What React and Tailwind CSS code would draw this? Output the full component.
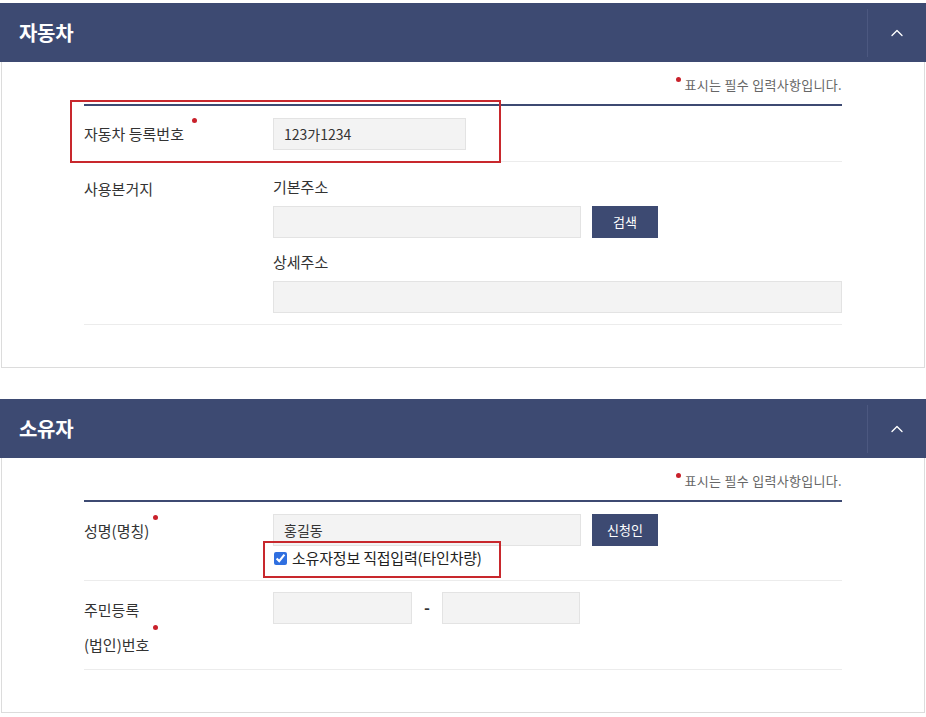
import { ChevronUp } from "lucide-react";

const font = { fontFamily: '"Noto Sans CJK KR", "Noto Sans", sans-serif' };

function Dot({ className = "" }) {
  return <span className={`absolute h-[5px] w-[5px] rounded-full bg-[#c9212b] ${className}`} />;
}

function Field({ className = "", value = "" }) {
  return (
    <div className={`flex h-[32px] items-center border border-[#e3e3e3] bg-[#f3f3f3] px-[10px] text-[14px] text-[#333] ${className}`}>
      {value}
    </div>
  );
}

function NavyButton({ children }) {
  return (
    <button type="button" className="h-[32px] w-[66px] bg-[#3d4a72] text-[13px] text-white">
      {children}
    </button>
  );
}

function Section({ title, children }) {
  return (
    <section>
      <div className="flex h-[59px] items-center bg-[#3d4a72]">
        <h2 className="flex-1 pl-[19px] text-[20px] font-bold tracking-[-0.3px] text-white">{title}</h2>
        <div className="h-[48px] w-px bg-[#4c5880]" />
        <div className="flex w-[58px] items-center justify-center text-white">
          <ChevronUp size={20} strokeWidth={1.6} />
        </div>
      </div>
      <div className="mx-px border border-t-0 border-[#dcdcdc] bg-white px-[82px] pb-[42px]">
        <p className="flex justify-end pt-[13px] pb-[9px] text-[13px] leading-[20px] tracking-[0.3px] text-[#666]">
          <span className="relative pl-[9px]">
            <Dot className="left-0 top-[2px]" />
            표시는 필수 입력사항입니다.
          </span>
        </p>
        <div className="h-[2px] bg-[#3d4a72]" />
        {children}
      </div>
    </section>
  );
}

export default function App() {
  return (
    <div className="min-h-screen bg-white pt-[3px]" style={font}>
      <Section title="자동차">
        <div className="relative flex items-center border-b border-[#ececec] pt-[12px] pb-[11px]">
          <div className="absolute -top-[6px] -left-[14px] h-[63px] w-[431px] border-2 border-[#c8282d]" />
          <div className="w-[189px] text-[15px] text-[#333]">
            <span className="relative">
              자동차 등록번호
              <Dot className="-right-[13px] -top-[5px]" />
            </span>
          </div>
          <Field className="w-[193px]" value="123가1234" />
        </div>

        <div className="flex border-b border-[#ececec] pt-[15px] pb-[11px]">
          <div className="w-[189px] pt-[1px] text-[15px] text-[#333]">사용본거지</div>
          <div className="flex-1">
            <div className="mb-[9px] text-[15px] leading-[20px] text-[#333]">기본주소</div>
            <div className="flex gap-[11px]">
              <Field className="w-[308px]" />
              <NavyButton>검색</NavyButton>
            </div>
            <div className="mt-[14px] mb-[9px] text-[15px] leading-[20px] text-[#333]">상세주소</div>
            <Field className="w-full" />
          </div>
        </div>
      </Section>

      <div className="h-[31px]" />

      <Section title="소유자">
        <div className="flex border-b border-[#ececec] pt-[12px] pb-[12px]">
          <div className="w-[189px] pt-[6px] text-[15px] text-[#333]">
            <span className="relative">
              성명(명칭)
              <Dot className="-right-[9px] -top-[5px]" />
            </span>
          </div>
          <div className="flex-1">
            <div className="flex gap-[11px]">
              <Field className="w-[308px]" value="홍길동" />
              <NavyButton>신청인</NavyButton>
            </div>
            <label className="relative mt-[2px] flex h-[20px] items-center gap-[5px] pl-[1px] text-[15px] tracking-[-0.2px] text-[#222]">
              <span className="absolute -top-[7px] -left-[10px] h-[37px] w-[238px] border-2 border-[#c8282d]" />
              <input type="checkbox" checked readOnly className="h-[13px] w-[13px] accent-[#2f6fe0]" />
              소유자정보 직접입력(타인차량)
            </label>
          </div>
        </div>

        <div className="flex border-b border-[#ececec] pt-[11px] pb-[7px]">
          <div className="w-[189px] text-[15px] leading-[35px] text-[#333]">
            <div>주민등록</div>
            <div>
              <span className="relative">
                (법인)번호
                <Dot className="-right-[9px] -top-[9px]" />
              </span>
            </div>
          </div>
          <div className="flex items-start gap-[11px]">
            <Field className="w-[139px]" />
            <span className="w-[8px] pt-[5px] text-center text-[16px] font-bold leading-[20px] text-[#333]">-</span>
            <Field className="w-[138px]" />
          </div>
        </div>
      </Section>
    </div>
  );
}
